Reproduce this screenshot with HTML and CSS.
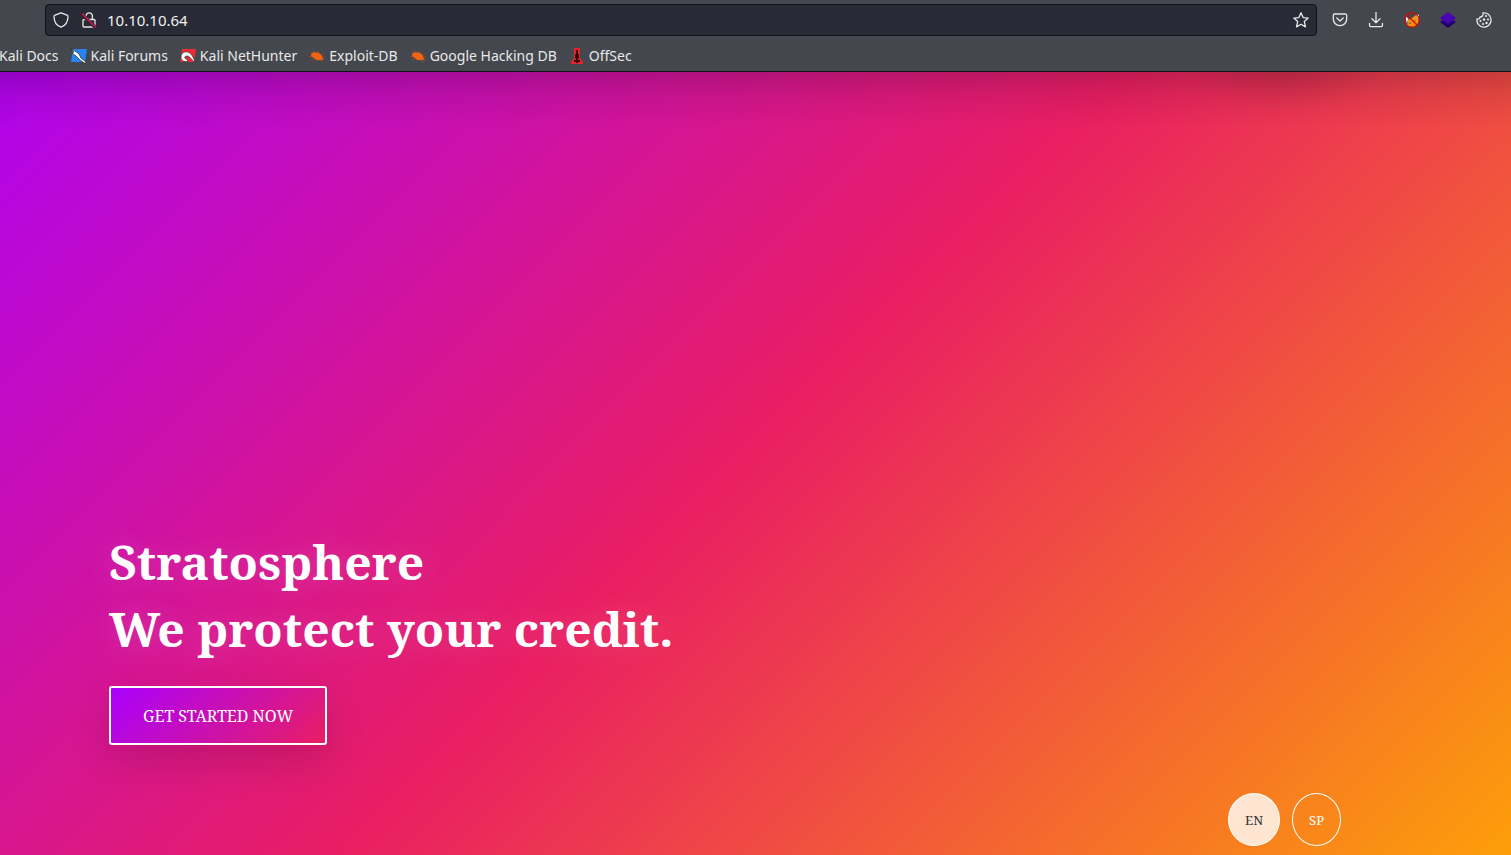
FILE: index.html
```html
<!DOCTYPE html>
<html lang="en">
<head>
<meta charset="utf-8">
<meta name="viewport" content="width=device-width, initial-scale=1">
<title>Stratosphere</title>
<link rel="stylesheet" href="styles.css">
</head>
<body>
<svg class="defs" aria-hidden="true">
  <symbol id="bug" viewBox="0 0 16 16">
    <path d="M1 5l3 2M4 2.500l2 3M9 3l1 3M0 8.500h4M2 12l4-2M6 13l2-2M12 7l3-1M12 9l4 0M11 12l3 2" stroke="#a85020" stroke-width="0.700" fill="none"/>
    <path d="M2 7c0-2 3-3.500 5-2.500 3 0 5 1.500 6 4l.5 1.500 1.500 2-3-.3C9 13 6 11.500 4.500 9.500 3 9 2 8 2 7z" fill="#f26411"/>
  </symbol>
</svg>
<header class="browser">
  <div class="toolbar">
    <div class="address">
      <svg class="icon" viewBox="0 0 16 16"><path d="M8 .8l6 2.300c.7.300 1 .7 1 1.400C15 9.500 12.500 13.500 8 15.200 3.500 13.500 1 9.500 1 4.500c0-.7.3-1.100 1-1.400z" class="line"/></svg>
      <svg class="icon lock" viewBox="0 0 16 16"><path d="M5 4a3.200 3.200 0 0 1 6.400 0v3M3 7.500h10a1 1 0 0 1 1 1V14a1 1 0 0 1-1 1H3a1 1 0 0 1-1-1V8.500a1 1 0 0 1 1-1z" class="line"/><path d="M.5 2l14 13.500" stroke="#282a36" stroke-width="3.500"/><path d="M1 1.500l14 14" stroke="#e2124b" stroke-width="1.400"/></svg>
      <input class="url" type="text" aria-label="Address" value="10.10.10.64">
      <button class="tool" aria-label="Bookmark"><svg class="icon" viewBox="0 0 16 16"><path d="M8 .8l2.100 4.800 5.100.5-3.900 3.500 1.200 5.300L8 12.200l-4.500 2.700 1.200-5.300L.8 6.100l5.100-.5z" class="line"/></svg></button>
    </div>
    <div class="extensions">
      <button class="tool" aria-label="Pocket"><svg class="icon" viewBox="0 0 16 16"><path d="M2.500 2h11a1.200 1.200 0 0 1 1.200 1.200V7a6.700 6.700 0 0 1-13.400 0V3.200A1.200 1.200 0 0 1 2.500 2zM4.800 6L8 9l3.200-3" class="line"/></svg></button>
      <button class="tool" aria-label="Downloads"><svg class="icon" viewBox="0 0 16 16"><path d="M8 .5v10M4 6.800l4 4 4-4M1.500 11.500v1.700a1.500 1.500 0 0 0 1.500 1.500h10a1.500 1.500 0 0 0 1.500-1.500v-1.700" class="line"/></svg></button>
      <button class="tool" aria-label="Proxy"><svg class="icon" viewBox="0 0 16 16"><path d="M3 13l1-5 4-2 4-3 3 3-.5 6-4 3H5z" fill="#f09416"/><path d="M1.500 4l3 3-2 4zM12 2l3 1v5z" fill="#eee"/><path d="M5 11.500l2-.5M9.500 10l2-1.500" stroke="#6b4c28" fill="none"/><circle cx="8" cy="8" r="7.200" fill="none" stroke="#d10808" stroke-width="1.200"/><path d="M3 3l10 10" stroke="#d10808" stroke-width="1.200"/></svg></button>
      <button class="tool" aria-label="Layers"><svg class="icon" viewBox="0 0 16 16"><path d="M0 10l3-2h10l3 2-8 6z" fill="#1f0071"/><path d="M8 0l8 6-8 6-8-6z" fill="#4a05b2"/></svg></button>
      <button class="tool" aria-label="Cookies"><svg class="icon" viewBox="0 0 16 16"><path d="M7 1a7.100 7.100 0 1 1-6 6c1.500.4 3-.3 3-2 1.800.2 3.500-1.500 3-4z" class="line"/><g fill="#e8e8e8"><circle cx="10" cy="4" r="1.100"/><circle cx="4.500" cy="9" r="1.100"/><circle cx="8" cy="7.500" r="1.200"/><circle cx="12" cy="7.500" r="1.100"/><circle cx="7" cy="12" r="1.100"/><circle cx="10.500" cy="11" r="1.200"/></g></svg></button>
    </div>
  </div>
  <nav class="bookmarks" aria-label="Bookmarks">
    <a href="#">Kali Docs</a>
    <a href="#"><svg class="icon" viewBox="0 0 16 16"><path d="M2 1h14l-2 13H0z" fill="#2684f5"/><path d="M0 0l4 3 4 3 2 4 5 4-1 1.500-5-3.500-4-4-4-3 2-1z" fill="#fff" stroke="#222" stroke-width=".7"/></svg>Kali Forums</a>
    <a href="#"><svg class="icon" viewBox="0 0 16 16"><path d="M2 1h14l-2 13H0z" fill="#ef2b31"/><path d="M10 5C5 2 1 5 1 9s3 5 7 4.500l-1-2.500c-3 0-3-3 0-3 3 0 4 4 8 6-1-4-3-7-5-9z" fill="#fff" stroke="#222" stroke-width=".7"/></svg>Kali NetHunter</a>
    <a href="#"><svg class="icon"><use href="#bug"/></svg>Exploit-DB</a>
    <a href="#"><svg class="icon"><use href="#bug"/></svg>Google Hacking DB</a>
    <a href="#"><svg class="icon" viewBox="0 0 16 16"><path d="M5 0h6v10l3 4v2H2v-2l3-4z" fill="#e62128"/><path d="M7 2h2v4l1 1v3l-1 1v1h2v2H9v1H7v-1H5v-2h2v-1l-1-1V7l1-1z" fill="#35070b"/></svg>OffSec</a>
  </nav>
</header>
<main class="hero">
  <section class="intro">
    <h1>Stratosphere<br>We protect your credit.</h1>
    <a class="cta" href="#">GET STARTED NOW</a>
  </section>
  <div class="languages">
    <button class="lang active">EN</button>
    <button class="lang">SP</button>
  </div>
</main>
</body>
</html>
```
FILE: styles.css
```css
* { box-sizing: border-box; }

body {
  display: flex;
  flex-direction: column;
  min-height: 100vh;
  margin: 0;
  font-family: "Noto Serif", "Droid Serif", "DejaVu Serif Condensed", "DejaVu Serif", serif;
}

button {
  padding: 0;
  border: 0;
  background: none;
  font: inherit;
  color: inherit;
}

.defs { display: none; }

.browser {
  background: #44474d;
  border-bottom: 1px solid #101116;
  color: #e8e8e8;
  font: 14px/20px "Noto Sans", sans-serif;
}

.toolbar {
  display: flex;
  padding: 4px 19px 4px 45px;
}

.address {
  display: flex;
  flex: 1;
  align-items: center;
  height: 32px;
  padding: 0 7px;
  border: 1px solid #101116;
  border-radius: 4px;
  background: #282a36;
}

.icon {
  display: block;
  flex: none;
  width: 16px;
  height: 16px;
}

.line {
  fill: none;
  stroke: #e8e8e8;
  stroke-width: 1.3;
  stroke-linecap: round;
  stroke-linejoin: round;
}

.lock { margin-left: 12px; }

.url {
  flex: 1;
  min-width: 0;
  margin-left: 10px;
  padding: 0;
  border: 0;
  outline: 0;
  background: none;
  color: #f0f0f0;
  font: 15px/20px "Noto Sans", sans-serif;
}

.extensions {
  display: flex;
  gap: 20px;
  align-items: center;
  margin-left: 15px;
}

.bookmarks {
  display: flex;
  gap: 12px;
  height: 31px;
  margin-left: -1px;
  padding-top: 6px;
}

.bookmarks a {
  display: flex;
  gap: 4px;
  align-items: center;
  height: 20px;
  color: inherit;
  text-decoration: none;
  white-space: nowrap;
}

.hero {
  display: flex;
  flex: 1;
  flex-direction: column;
  justify-content: flex-end;
  padding: 64px 170px 9px 109px;
  background:
    radial-gradient(100px 40px at 85% 0, rgba(0, 0, 0, 0.1), transparent),
    linear-gradient(rgba(0, 0, 0, 0.17), rgba(0, 0, 0, 0.07) 24px, transparent 56px),
    linear-gradient(135deg, #aa00ff -6%, #e91e63 49%, #ffab00 105%);
  color: #fff;
}

h1 {
  margin: 0 0 24px;
  font-size: 48px;
  line-height: 67px;
  text-shadow: 0 0 32px rgba(255, 255, 255, 0.18);
}

.cta {
  display: inline-block;
  padding: 17px 32px 15px;
  border: 2px solid #fff;
  border-radius: 3px;
  background: linear-gradient(135deg, #aa00ff, #e91e63);
  box-shadow: 0 16px 40px rgba(0, 0, 0, 0.14);
  color: #fff;
  font-size: 16px;
  line-height: 23px;
  text-decoration: none;
}

.languages {
  display: flex;
  gap: 12px;
  justify-content: flex-end;
  margin-top: 48px;
}

.lang {
  height: 53px;
  padding: 0 16px;
  border: 1px solid #fff;
  border-radius: 50%;
  font-size: 13px;
}

.active {
  background: rgba(255, 255, 255, 0.8);
  color: #333;
}
```
